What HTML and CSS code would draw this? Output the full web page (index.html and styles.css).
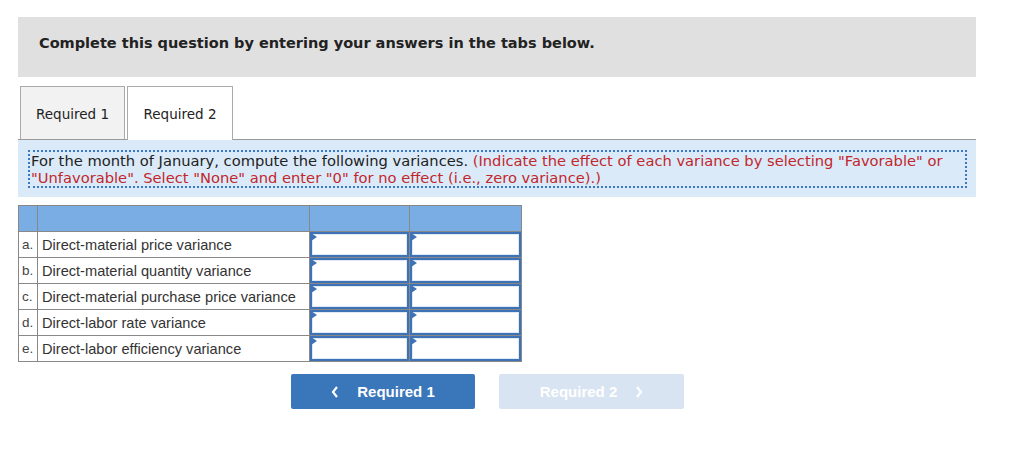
FILE: index.html
```html
<!DOCTYPE html>
<html>
<head>
<meta charset="utf-8">
<link rel="stylesheet" href="styles.css">
</head>
<body>
<div class="page">
  <div class="banner">Complete this question by entering your answers in the tabs below.</div>
  <div class="tabs">
    <div class="tab">Required 1</div>
    <div class="tab active">Required 2</div>
  </div>
  <div class="instr">
    <div class="instr-inner">For the month of January, compute the following variances. <span class="red">(Indicate the effect of each variance by selecting "Favorable" or "Unfavorable". Select "None" and enter "0" for no effect (i.e., zero variance).)</span></div>
  </div>
  <table class="grid">
    <colgroup><col class="c1"><col class="c2"><col class="c3"><col class="c4"></colgroup>
    <tr class="head"><th></th><th></th><th></th><th></th></tr>
    <tr><td class="lt">a.</td><td class="desc">Direct-material price variance</td><td class="in"><div class="box"></div></td><td class="in"><div class="box"></div></td></tr>
    <tr><td class="lt">b.</td><td class="desc">Direct-material quantity variance</td><td class="in"><div class="box"></div></td><td class="in"><div class="box"></div></td></tr>
    <tr><td class="lt">c.</td><td class="desc">Direct-material purchase price variance</td><td class="in"><div class="box"></div></td><td class="in"><div class="box"></div></td></tr>
    <tr><td class="lt">d.</td><td class="desc">Direct-labor rate variance</td><td class="in"><div class="box"></div></td><td class="in"><div class="box"></div></td></tr>
    <tr><td class="lt">e.</td><td class="desc">Direct-labor efficiency variance</td><td class="in"><div class="box"></div></td><td class="in"><div class="box"></div></td></tr>
  </table>
  <div class="nav">
    <div class="btn prev"><svg width="8" height="12" viewBox="0 0 8 12"><polyline points="6,1 2,6 6,11" fill="none" stroke="#fff" stroke-width="2.2"/></svg><span>Required 1</span></div>
    <div class="btn next"><span>Required 2</span><svg width="8" height="12" viewBox="0 0 8 12"><polyline points="2,1 6,6 2,11" fill="none" stroke="#fff" stroke-width="2.2"/></svg></div>
  </div>
</div>
</body>
</html>
```
FILE: styles.css
```css
html, body { margin: 0; padding: 0; background: #fff; }
.page { width: 958px; padding: 17px 0 0 18px; font-family: "DejaVu Sans", Verdana, sans-serif; }
.banner { height: 60px; box-sizing: border-box; background: #e0e0e0; padding: 16px 0 0 21px; font-size: 14.5px; font-weight: bold; line-height: 20px; color: #222; }
.tabs { display: flex; gap: 2px; margin-top: 9px; padding-left: 2px; border-bottom: 1px solid #999; height: 53px; }
.tab { width: 105px; height: 53px; box-sizing: border-box; border: 1px solid #aaa; border-bottom: none; background: #f2f2f2; font-size: 13.5px; color: #222; display: flex; align-items: center; justify-content: center; padding-top: 1px; }
.tab.active { background: #fff; width: 106px; height: 54px; margin-bottom: -1px; }
.instr { background: #dbeaf8; padding: 10px 9px 9px 10px; }
.instr-inner { border: 2px dotted #3a78c2; padding: 0 1px; font-size: 14.7px; line-height: 17px; color: #222; }
.red { color: #c1272d; }
.grid { border-collapse: collapse; margin-top: 8px; width: 503px; table-layout: fixed; font-family: "Liberation Sans", Arial, sans-serif; font-size: 14.6px; color: #333; }
.c1 { width: 19px; } .c2 { width: 272px; } .c3 { width: 100px; } .c4 { width: 112px; }
.grid th, .grid td { border: 1px solid #888; height: 25px; padding: 0; }
.grid tr.head th { background: #7aade3; height: 25px; }
.lt { text-align: left; padding-left: 3px !important; font-size: 13.5px; color: #444; }
.desc { padding-left: 4px !important; }
.in { padding: 0 !important; }
.box { position: relative; height: 25px; box-sizing: border-box; border: 2px solid #3d73b6; background: #fff; box-shadow: inset 0 0 0 1px #dfe9f5; }
.box::before { content: ""; position: absolute; left: -1px; top: -1px; border-left: 6px solid #3d73b6; border-top: 4px solid transparent; border-bottom: 4px solid transparent; }
.nav { display: flex; gap: 24px; margin-top: 12px; padding-left: 273px; }
.btn { width: 184px; height: 35px; border-radius: 2px; display: flex; align-items: center; justify-content: center; gap: 18px; font-family: "Liberation Sans", Arial, sans-serif; font-weight: bold; font-size: 15px; color: #fff; }
.btn.prev { background: #3a76ba; }
.btn.next { background: #d9e4f2; width: 185px; }
```
